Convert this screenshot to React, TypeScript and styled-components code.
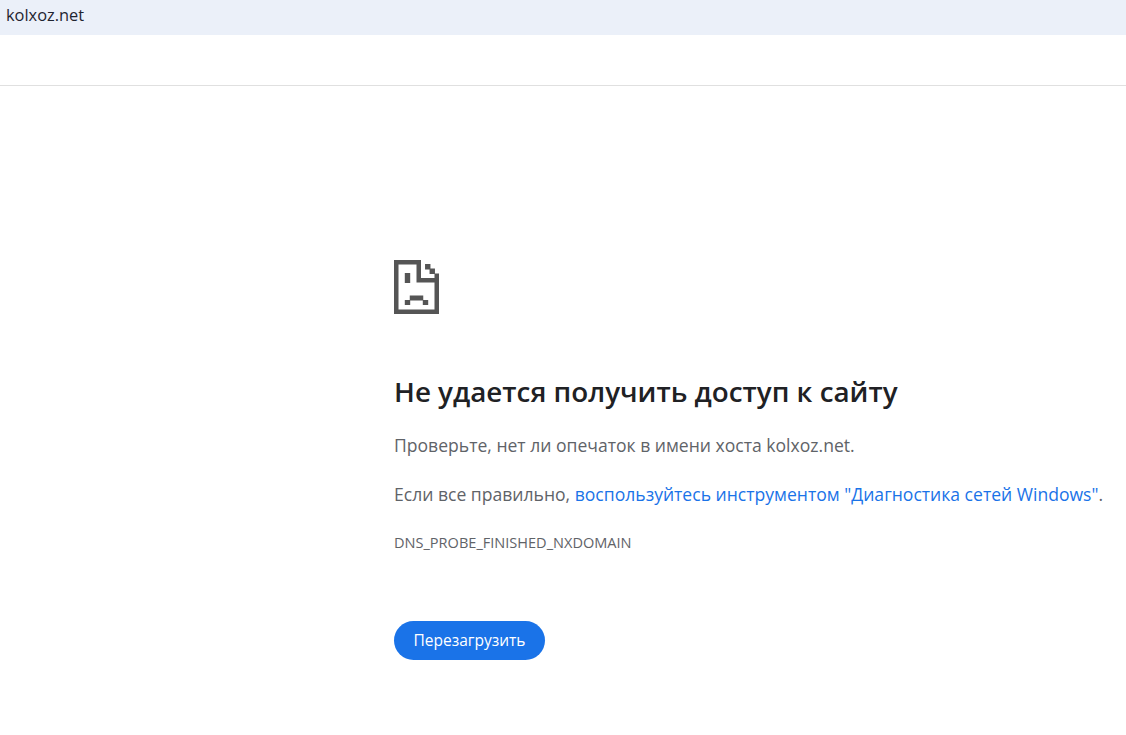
import React from "react";
import styled, { createGlobalStyle } from "styled-components";

const GlobalStyle = createGlobalStyle`
  html, body {
    margin: 0;
    background: #fff;
    font-family: "Open Sans", "Noto Sans", sans-serif;
  }
`;

const TitleBar = styled.div`
  height: 35px;
  background: #ebf0f9;
  padding-left: 6px;
  color: #1f2430;
  font-size: 16.4px;
  line-height: 29px;
`;

const Toolbar = styled.div`
  height: 49.5px;
  border-bottom: 1px solid #e0e0e0;
`;

const Main = styled.main`
  padding: 174px 0 0 394px;
`;

const ErrorIcon = styled.svg`
  display: block;
  width: 45px;
  height: 54px;
`;

const Heading = styled.h1`
  margin: 59px 0 0;
  font-size: 27.8px;
  line-height: 36px;
  font-weight: 600;
  color: #202124;
  white-space: nowrap;
`;

const Message = styled.p<{ $gap: number }>`
  margin: ${(p) => p.$gap}px 0 0;
  font-size: 17.57px;
  line-height: 24px;
  color: #5f6368;
  white-space: nowrap;
`;

const HelpLink = styled.span`
  color: #1a73e8;
`;

const ErrorCode = styled.div`
  margin-top: 26px;
  font-size: 14.55px;
  line-height: 20px;
  color: #5f6368;
`;

const ReloadButton = styled.button`
  display: block;
  margin-top: 69px;
  width: 151px;
  height: 39px;
  border: 0;
  border-radius: 20px;
  padding: 0;
  background: #1a73e8;
  color: #fff;
  font-family: inherit;
  font-size: 15.5px;
`;

export default function App() {
  return (
    <>
      <GlobalStyle />
      <TitleBar>kolxoz.net</TitleBar>
      <Toolbar />
      <Main>
        <ErrorIcon viewBox="0 0 10 12" fill="#555">
          <path d="M0 0h6v4h3V3h1v9H0zM1 1v10h8V5H5V1z" fillRule="evenodd" />
          <path d="M6.9.9h1.2v1.2H6.9zM7.9 1.9h1.2v1.2H7.9zM2.4 2.9h1.2v2.2H2.4zM3.5 7.9h3v1.1h-3zM2.4 8.9h1.2v1.1H2.4zM6.4 8.9h1.2v1.1H6.4z" />
        </ErrorIcon>
        <Heading>Не удается получить доступ к сайту</Heading>
        <Message $gap={24}>Проверьте, нет ли опечаток в имени хоста kolxoz.net.</Message>
        <Message $gap={25}>
          Если все правильно, <HelpLink>воспользуйтесь инструментом "Диагностика сетей Windows"</HelpLink>.
        </Message>
        <ErrorCode>DNS_PROBE_FINISHED_NXDOMAIN</ErrorCode>
        <ReloadButton>Перезагрузить</ReloadButton>
      </Main>
    </>
  );
}
